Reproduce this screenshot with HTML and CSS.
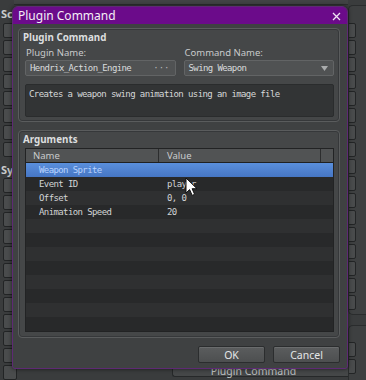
FILE: index.html
```html
<!doctype html>
<html>
<head>
<meta charset="utf-8">
<title>Plugin Command</title>
<link rel="stylesheet" href="styles.css">
</head>
<body>
<div class="desk">
	<div class="side">
		<div class="side-title">Sc</div>
		<div class="side-btns">
			<span></span><span></span><span></span><span></span><span></span><span></span><span></span><span></span>
		</div>
		<div class="side-title sy">Sy</div>
		<div class="side-btns">
			<span></span><span></span><span></span><span></span><span></span><span></span><span></span><span></span><span></span><span></span><span></span><span></span>
		</div>
	</div>
	<div class="middle">
		<div class="mid-top"></div>
		<div class="mid-fill"></div>
		<div class="mid-bottom"><div class="bg-btn">Plugin Command</div></div>
	</div>
	<div class="right">
		<div class="rpanel">
			<span></span><span></span><span></span><span></span><span></span><span></span><span></span><span></span><span></span><span></span><span></span><span></span><span></span><span></span><span></span><span></span><span></span>
		</div>
		<div class="rpanel low">
			<span></span><span></span>
		</div>
	</div>
</div>

<div class="dialog">
	<div class="titlebar">
		<span class="title">Plugin Command</span>
		<svg class="close" width="9" height="9" viewBox="0 0 9 9"><path d="M1 1L8 8M8 1L1 8" stroke="#f0e6f4" stroke-width="1.3"/></svg>
	</div>
	<div class="body">
		<div class="group cmd">
			<div class="legend">Plugin Command</div>
			<div class="fields">
				<div class="field">
					<label>Plugin Name:</label>
					<div class="input">Hendrix_Action_Engine<span class="dots">···</span></div>
				</div>
				<div class="field">
					<label>Command Name:</label>
					<div class="input">Swing Weapon<svg class="arrow" width="7" height="5" viewBox="0 0 7 5"><path d="M0 0H7L3.5 5Z" fill="#a9abac"/></svg></div>
				</div>
			</div>
			<div class="desc">Creates a weapon swing animation using an image file</div>
		</div>
		<div class="group args">
			<div class="legend">Arguments</div>
			<div class="table">
				<div class="thead">
					<div class="c1">Name</div>
					<div class="c2">Value</div>
					<div class="c3"></div>
				</div>
				<div class="row sel"><div class="c1">Weapon Sprite</div><div class="c2"></div></div>
				<div class="row"><div class="c1">Event ID</div><div class="c2">player</div></div>
				<div class="row"><div class="c1">Offset</div><div class="c2">0, 0</div></div>
				<div class="row"><div class="c1">Animation Speed</div><div class="c2">20</div></div>
				<div class="row"></div>
				<div class="row"></div>
				<div class="row"></div>
				<div class="row"></div>
				<div class="row"></div>
				<div class="row"></div>
				<div class="row"></div>
				<div class="row"></div>
			</div>
		</div>
		<div class="buttons">
			<button>OK</button>
			<button>Cancel</button>
		</div>
	</div>
</div>

<svg class="cursor" width="14" height="20" viewBox="0 0 14 20"><path d="M1 1V16L4.6 12.6L7.2 18.4L9.6 17.3L7.1 11.7H12Z" fill="#fff" stroke="#111" stroke-width="1"/></svg>
</body>
</html>
```

FILE: styles.css
```css
*{ margin:0; padding:0; box-sizing:border-box;}
body{ width:366px; height:380px; overflow:hidden; position:relative; background:#3a3c3d; font-family:"Noto Sans","Open Sans",sans-serif; color:#d4d6d7;}

/* window behind the dialog */
.desk{ display:flex; height:380px;}
.side{ width:14px; padding:9px 0 0 1px; display:flex; flex-direction:column;}
.side-title{ font-size:11px; font-weight:bold; line-height:10px; height:12px; color:#c9cbcc;}
.side-title.sy{ margin-top:8px;}
.side-btns{ display:flex; flex-direction:column; gap:2px; padding:2px 0 0 2px;}
.side-btns span{ display:block; height:15px; width:14px; border:1px solid #222425; border-radius:2px; background:#4a4c4d;}

.middle{ flex:1; display:flex; flex-direction:column;}
.mid-top{ height:5px; border-bottom:1px solid #2c2e2f; background:#414344;}
.mid-fill{ flex:1;}
.mid-bottom{ height:24px; display:flex; justify-content:flex-end;}
.bg-btn{ width:176px; height:21px; border:1px solid #262829; border-right:none; border-radius:3px 0 0 3px; background:#454748; font-size:10.5px; text-align:center; line-height:12px; color:#bfc1c2; padding:8px 14px 0 0;}

.right{ width:18px; display:flex; flex-direction:column; padding-top:5px; gap:10px;}
.rpanel{ border:1px solid #2a2c2d; border-right:none; border-radius:5px 0 0 5px; background:#3e4041; height:310px; padding:17px 0 0 0; display:flex; flex-direction:column; gap:2px; overflow:hidden; margin-right:-6px;}
.rpanel.low{ flex:1; border-bottom:none; border-radius:5px 0 0 0; padding-top:16px;}
.rpanel span{ display:block; height:15px; width:12px; border:1px solid #232526; border-radius:2px; background:#494b4c; margin-left:-5px;}

/* dialog */
.dialog{ position:absolute; left:12px; top:6px; width:336px; height:363px; border:1px solid #5e2a74; border-radius:6px 6px 3px 3px; background:#3f4142; box-shadow:0 0 4px rgba(0,0,0,.6); overflow:hidden; display:flex; flex-direction:column;}
.titlebar{ height:22px; background:#6b0b8a; display:flex; align-items:center; justify-content:space-between; padding:0 6px 0 5px;}
.title{ font-size:12px; color:#f4eef6;}
.close{ margin-top:1px;}
.body{ flex:1; padding:4px 7px 6px 5px; display:flex; flex-direction:column; gap:8px;}

.group{ border:1px solid #5a5c5d; border-radius:4px; background:#454748; padding:3px 5px 4px 6px; box-shadow:inset 0 0 0 1px #36383a;}
.legend{ font-size:9.8px; font-weight:bold; line-height:12px; color:#dcdedf; margin-left:-2px;}
.fields{ display:flex; gap:8px; margin-top:2px;}
.field{ flex:1; display:flex; flex-direction:column;}
.field label{ font-size:9.5px; line-height:14px; color:#c8cacb; margin-left:1px;}
.input{ height:16px; border:1px solid #626465; border-radius:2px; background:#505253; display:flex; align-items:center; justify-content:space-between; padding:0 5px 0 4px; font-family:"DejaVu Sans Mono",monospace; font-size:9px; letter-spacing:-0.6px; color:#dadcdd;}
.dots{ color:#b5b7b8; letter-spacing:0;}
.desc{ margin-top:8px; height:33px; border:1px solid #2a2c2d; border-radius:2px; background:#323435; padding:3px 3px; font-family:"DejaVu Sans Mono",monospace; font-size:9px; letter-spacing:-0.6px; line-height:13px; color:#d6d8d9;}

.args{ flex:1; display:flex; flex-direction:column;}
.args .legend{ margin-bottom:2px;}
.table{ flex:1; border:1px solid #222324; background:#2a2b2c; overflow:hidden; margin-bottom:1px;}
.thead{ display:flex; height:14px; background:#515354; border-bottom:1px solid #1f2021; font-size:9.5px; line-height:13px; color:#c9cbcc;}
.thead .c1{ width:133px; padding-left:7px; border-right:1px solid #2c2d2e;}
.thead .c2{ flex:1; padding-left:8px; border-right:1px solid #2c2d2e;}
.thead .c3{ width:12px;}
.row{ display:flex; height:14px; font-family:"DejaVu Sans Mono",monospace; font-size:9px; letter-spacing:-0.6px; line-height:14px; color:#d2d4d5; background:#2f3031;}
.row:nth-child(odd){ background:#28292a;}
.row .c1{ width:133px; padding-left:13px;}
.row .c2{ flex:1; padding-left:8px;}
.row.sel{ background:linear-gradient(#5a8fdc,#4676c4); color:#b9d3ff;}

.buttons{ display:flex; justify-content:flex-end; gap:8px; padding-right:0;}
.buttons button{ width:67px; height:17px; border:1px solid #2b2d2e; border-radius:2px; background:linear-gradient(#5b5d5e,#4d4f50); font-family:"Noto Sans","Open Sans",sans-serif; font-size:10.5px; color:#e4e6e7; box-shadow:inset 0 1px 0 #6a6c6d;}

.cursor{ position:absolute; left:185px; top:177px;}
```
